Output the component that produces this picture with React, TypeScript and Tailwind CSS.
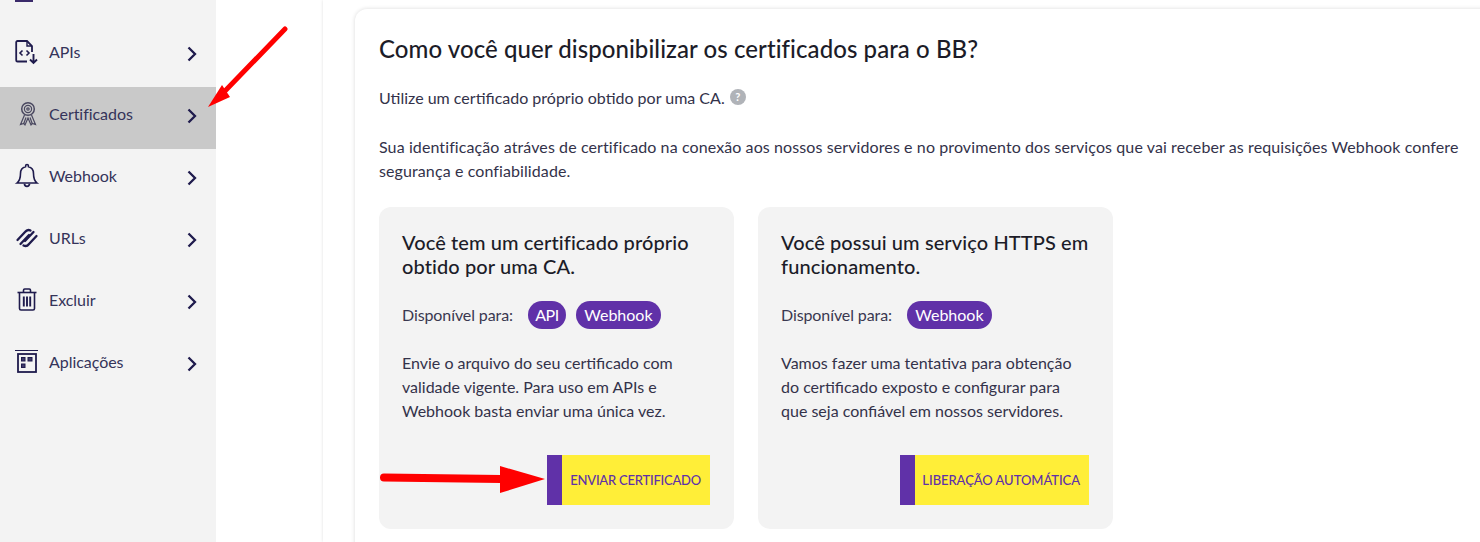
import React from "react";

const I = "w-[26px] h-[26px] shrink-0 text-[#1f1b4d]";

const ApiIcon = () => (
  <svg viewBox="0 0 26 26" className={I} fill="none" stroke="currentColor" strokeWidth="1.800">
    <path d="M13 22.500H3.500A1.300 1.300 0 0 1 2.200 21.200V3.300A1.300 1.300 0 0 1 3.500 2H13l5 5v6" />
    <path d="M13 2v5h5" strokeWidth="1.400" />
    <path d="M8.500 11.500 6 14l2.500 2.500M12.500 11.500 15 14l-2.500 2.500" strokeWidth="1.600" />
    <path d="M19.500 15v9M16 20.500l3.500 3.500 3.500-3.500" strokeWidth="1.900" />
  </svg>
);
const CertIcon = () => (
  <svg viewBox="0 0 26 26" className={I} fill="none" stroke="#4a4860" strokeWidth="1.200">
    <circle cx="14" cy="8" r="6.300" strokeWidth="1.500" />
    <circle cx="14" cy="8" r="3.600" />
    <circle cx="14" cy="8" r="1.200" />
    <path d="M10.500 14 6.500 23.500l3.200-1 1.300 1.500L14 17l3 7 1.300-1.500 3.200 1L17.500 14" />
    <path d="M12 16.500 9.800 22.500M16 16.500l2.200 6" />
  </svg>
);
const BellIcon = () => (
  <svg viewBox="0 0 26 26" className={I} fill="none" stroke="currentColor" strokeWidth="1.600">
    <path d="M13 1.500a1.400 1.400 0 0 1 1.400 1.400v.8c3.300.7 5.100 3.400 5.100 6.800 0 5 .8 7.300 3.500 9.500H3c2.700-2.200 3.500-4.500 3.500-9.500 0-3.400 1.800-6.100 5.100-6.800v-.8A1.400 1.400 0 0 1 13 1.500Z" />
    <path d="M10.500 20.800a2.500 2.500 0 0 0 5 0" strokeWidth="1.800" />
  </svg>
);
const UrlIcon = () => (
  <svg viewBox="0 0 26 26" className={I} fill="none" stroke="currentColor" strokeWidth="2.300" strokeLinecap="round">
    <path d="M3.500 15 11 7C12.500 5 14.500 4.500 16.500 5.500" />
    <path d="M6.500 19 15 10" />
    <path d="M22.500 11 15 19C13.500 21 11.500 21.500 9.500 20.500" />
    <path d="M19.500 7 11 16" />
  </svg>
);
const TrashIcon = () => (
  <svg viewBox="0 0 26 26" className={I} fill="none" stroke="currentColor" strokeWidth="1.600">
    <path d="M3.500 5.500h19" />
    <path d="M9.500 5.500V3.200C9.500 2.500 10 2 10.700 2h4.600c.7 0 1.200.5 1.200 1.200v2.300" />
    <path d="M5.500 6v15.500c0 1 .6 1.500 1.500 1.500h12c.9 0 1.500-.5 1.500-1.500V6" />
    <path d="M9.800 9.500v10M13 9.500v10M16.200 9.500v10" strokeWidth="1.900" />
  </svg>
);
const AppIcon = () => (
  <svg viewBox="0 0 26 26" className={I} fill="none" stroke="currentColor">
    <path d="M1 1.500h23" strokeWidth="1" />
    <rect x="4" y="5" width="18" height="18" strokeWidth="1.800" />
    <rect x="7.500" y="8.500" width="3.500" height="3.500" fill="#3f3a6a" strokeWidth="1" />
    <rect x="14" y="8.500" width="4" height="3.500" fill="#3f3a6a" strokeWidth="1" />
    <rect x="7.500" y="15" width="3.500" height="3.500" fill="#3f3a6a" strokeWidth="1" />
  </svg>
);
const Chevron = () => (
  <svg viewBox="0 0 12 16" className="w-[12px] h-[16px] shrink-0 mt-[4px]" fill="none" stroke="#1f1b4d" strokeWidth="2.300">
    <path d="M2.500 1.500 9 8l-6.500 6.500" />
  </svg>
);

const items = [
  { label: "APIs", icon: <ApiIcon /> },
  { label: "Certificados", icon: <CertIcon />, active: true },
  { label: "Webhook", icon: <BellIcon /> },
  { label: "URLs", icon: <UrlIcon /> },
  { label: "Excluir", icon: <TrashIcon /> },
  { label: "Aplicações", icon: <AppIcon /> },
];

const Card = ({
  title,
  pills,
  text,
  action,
  buttonWidth,
  tracking,
}: {
  title: string[];
  pills: string[];
  text: string[];
  action: string;
  buttonWidth: string;
  tracking: string;
}) => (
  <div className="w-[355px] h-[322px] rounded-[12px] bg-[#f3f3f3] pt-[23px] pl-[23px] pr-[24px] flex flex-col">
    <h3 className="text-[20px] leading-[24px] tracking-[0.1px] text-[#1c1c28] font-medium">
      {title.map((t) => (
        <div key={t}>{t}</div>
      ))}
    </h3>
    <div className="mt-[23px] h-[28px] flex items-center">
      <span className="text-[16px] tracking-[-0.1px] text-[#3a3850] mr-[15px]">Disponível para:</span>
      <div className="flex gap-[10px]">
        {pills.map((p) => (
          <span
            key={p}
            className={`h-[28px] rounded-full bg-[#6031a8] text-white text-[16px] flex items-center justify-center ${
              p === "API" ? "w-[38px] tracking-[-0.5px]" : "w-[85px]"
            }`}
          >
            {p}
          </span>
        ))}
      </div>
    </div>
    <div className="mt-[22px] text-[16px] leading-[24px] text-[#33324a]">
      {text.map((t) => (
        <div key={t}>{t}</div>
      ))}
    </div>
    <div className="mt-auto mb-[24px] flex justify-end">
      <button className={`h-[50px] flex bg-[#ffee38] items-stretch ${buttonWidth}`}>
        <span className="w-[15px] bg-[#6031a8]" />
        <span className={`flex-1 pr-[9px] pt-[1px] flex items-center justify-end text-[13px] font-medium text-[#6031a8] uppercase ${tracking}`}>
          {action}
        </span>
      </button>
    </div>
  </div>
);

export default function App() {
  return (
    <div
      className="relative w-[1480px] h-[542px] overflow-hidden bg-white flex"
      style={{ fontFamily: '"Lato", "Noto Sans", sans-serif' }}
    >
      <aside className="w-[216px] h-full bg-[#f3f3f3] shrink-0 flex flex-col">
        <div className="h-[25px] flex items-start pl-[15px]">
          <div className="w-[18px] h-[2px] bg-[#3a2a6a]" />
        </div>
        {items.map((it) => (
          <div
            key={it.label}
            className={`h-[62px] flex items-center pl-[14px] pr-[18px] pb-[8px] ${it.active ? "bg-[#c9c9c9]" : ""}`}
          >
            {it.icon}
            <span className="ml-[9px] flex-1 text-[16px] tracking-[-0.05px] text-[#35345a]">{it.label}</span>
            <Chevron />
          </div>
        ))}
      </aside>
      <div className="w-[107px] shrink-0" />
      <main className="flex-1 min-w-0 bg-white shadow-[0_0_3px_rgba(0,0,0,0.13)] pl-[32px] pt-[9px]">
        <section className="w-[1200px] h-[620px] rounded-[12px] shadow-[0_0_4px_rgba(0,0,0,0.15)] pl-[24px] pt-[24px]">
          <h2 className="text-[24px] leading-[32px] tracking-[0.07px] text-[#1c1c28] font-medium">
            Como você quer disponibilizar os certificados para o BB?
          </h2>
          <p className="mt-[21px] h-[24px] text-[16px] leading-[24px] text-[#33324a] flex items-center">
            Utilize um certificado próprio obtido por uma CA.
            <span className="ml-[5px] -mt-[2px] w-[16px] h-[16px] rounded-full bg-[#b0b3b8] text-white text-[11px] font-bold flex items-center justify-center">
              ?
            </span>
          </p>
          <p className="mt-[25px] w-[1090px] text-[16px] leading-[24px] tracking-[0.1px] text-[#33324a]">
            Sua identificação atráves de certificado na conexão aos nossos servidores e no provimento dos serviços que vai
            receber as requisições Webhook confere segurança e confiabilidade.
          </p>
          <div className="mt-[24px] flex gap-[24px]">
            <Card
              title={["Você tem um certificado próprio", "obtido por uma CA."]}
              pills={["API", "Webhook"]}
              text={["Envie o arquivo do seu certificado com", "validade vigente. Para uso em APIs e", "Webhook basta enviar uma única vez."]}
              action="Enviar certificado"
              buttonWidth="w-[163px]"
              tracking="tracking-[-0.22px]"
            />
            <Card
              title={["Você possui um serviço HTTPS em", "funcionamento."]}
              pills={["Webhook"]}
              text={["Vamos fazer uma tentativa para obtenção", "do certificado exposto e configurar para", "que seja confiável em nossos servidores."]}
              action="Liberação automática"
              buttonWidth="w-[189px]"
              tracking="tracking-[-0.05px]"
            />
          </div>
        </section>
      </main>
      <svg className="absolute left-0 top-0 w-[1480px] h-[542px] pointer-events-none" viewBox="0 0 1480 542" fill="none">
        <path d="M285 29 225 91" stroke="#ff0000" strokeWidth="5" strokeLinecap="round" />
        <path d="M208 107 222 85 230 97Z" fill="#ff0000" />
        <path d="M384 477.500 501 479" stroke="#ff0000" strokeWidth="8" strokeLinecap="round" />
        <path d="M545 479 500 466V493Z" fill="#ff0000" />
      </svg>
    </div>
  );
}
